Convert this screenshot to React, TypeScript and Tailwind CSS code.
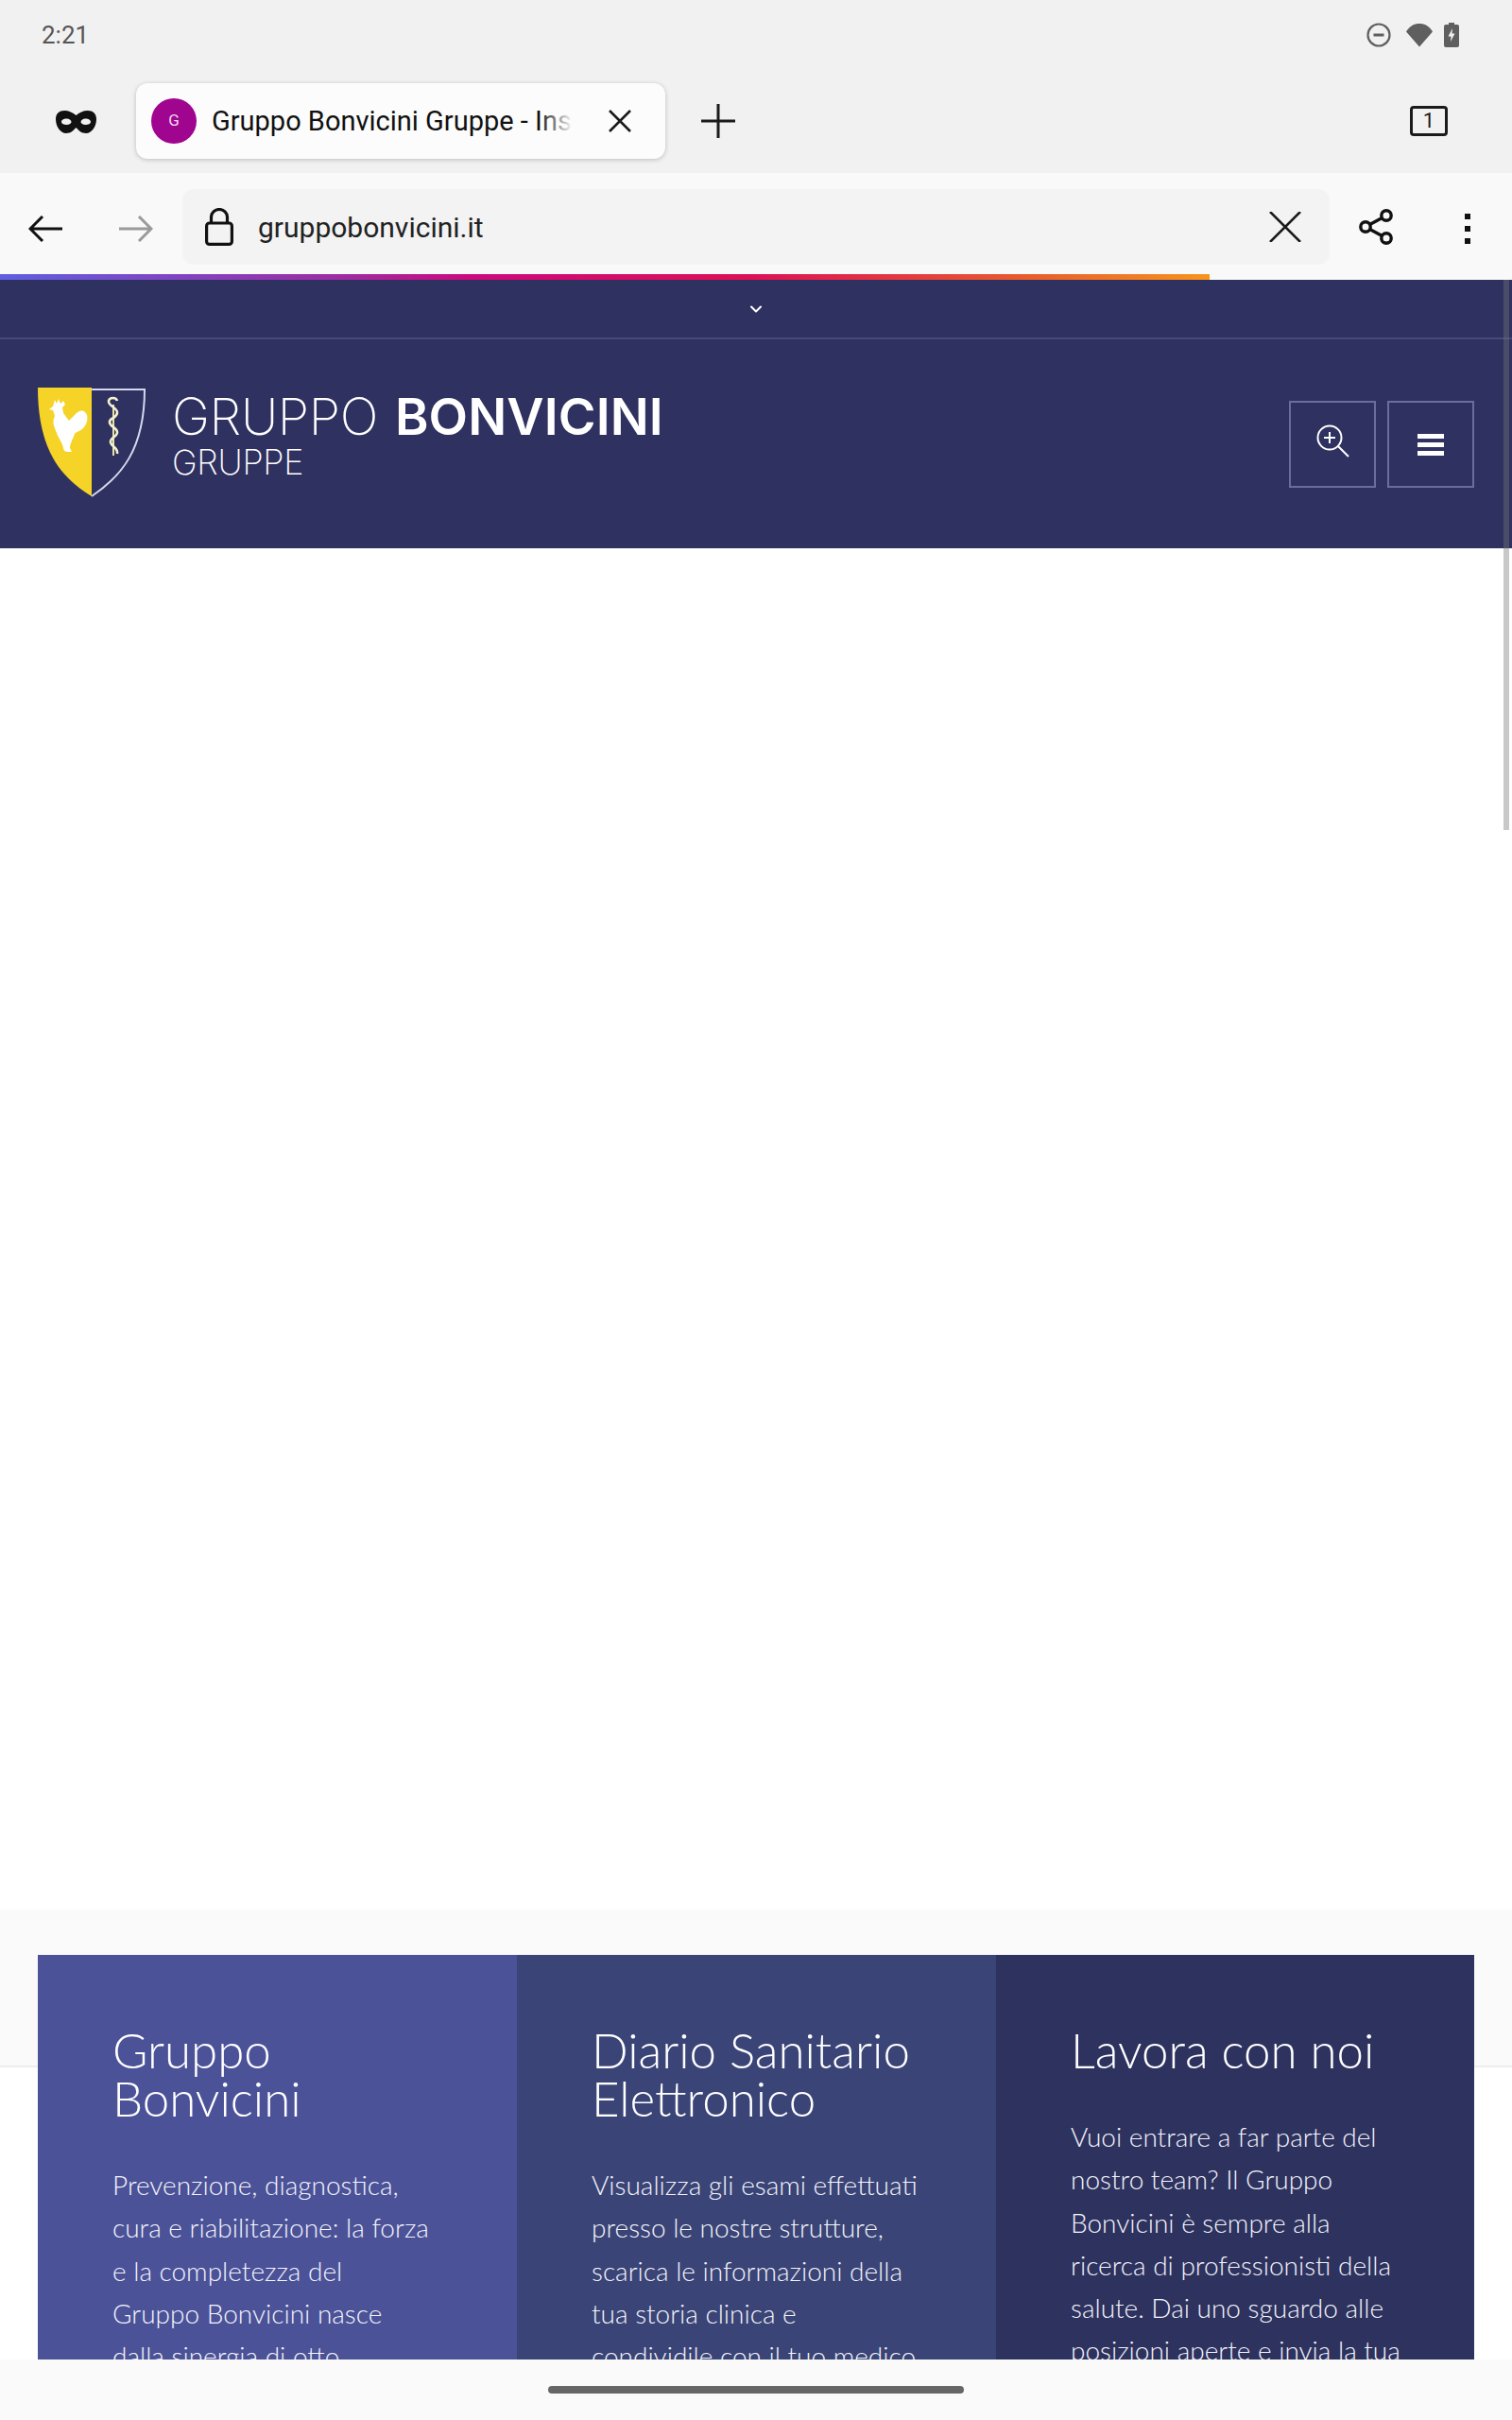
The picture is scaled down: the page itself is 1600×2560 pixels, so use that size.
import { ChevronDown } from "lucide-react";

const browserFont = "font-['Roboto',sans-serif]";
const headingFont = "font-['Inter',sans-serif]";
const cardFont = "font-['Lato',sans-serif]";

type InfoCard = {
  title: string[];
  lines: string[];
  bg: string;
};

const cards: InfoCard[] = [
  {
    title: ["Gruppo", "Bonvicini"],
    lines: [
      "Prevenzione, diagnostica,",
      "cura e riabilitazione: la forza",
      "e la completezza del",
      "Gruppo Bonvicini nasce",
      "dalla sinergia di otto",
    ],
    bg: "bg-[#4b5298]",
  },
  {
    title: ["Diario Sanitario", "Elettronico"],
    lines: [
      "Visualizza gli esami effettuati",
      "presso le nostre strutture,",
      "scarica le informazioni della",
      "tua storia clinica e",
      "condividile con il tuo medico",
    ],
    bg: "bg-[#3a4476]",
  },
  {
    title: ["Lavora con noi"],
    lines: [
      "Vuoi entrare a far parte del",
      "nostro team? Il Gruppo",
      "Bonvicini è sempre alla",
      "ricerca di professionisti della",
      "salute. Dai uno sguardo alle",
      "posizioni aperte e invia la tua",
    ],
    bg: "bg-[#2e325f]",
  },
];

function StatusBar() {
  return (
    <div className="flex h-[74px] items-center justify-between pl-[44px] pr-[56px]">
      <span className={`${browserFont} text-[26px] text-[#555555]`}>2:21</span>
      <div className="flex items-center">
        <svg width="26" height="26" viewBox="0 0 26 26" fill="none" stroke="#5f5f5f">
          <circle cx="13" cy="13" r="11.5" strokeWidth="2.2" />
          <path d="M7.5 13h11" strokeWidth="3" />
        </svg>
        <svg className="ml-[15px]" width="30" height="26" viewBox="0 0 30 26" fill="#5f5f5f">
          <path d="M15 25.5 1 9.5C4.5 3.5 9.5 1 15 1s10.500 2.500 14 8.500z" />
        </svg>
        <svg className="ml-[11px]" width="16" height="26" viewBox="0 0 16 26">
          <path d="M5 0h6v2h3a2 2 0 0 1 2 2v20a2 2 0 0 1-2 2H2a2 2 0 0 1-2-2V4a2 2 0 0 1 2-2h3z" fill="#5f5f5f" />
          <path d="M9 6 4.500 14.500H7.500L7 20l4.500-8.500H8.500z" fill="#f1f1f1" />
        </svg>
      </div>
    </div>
  );
}

function TabStrip() {
  return (
    <div className="flex h-[109px] items-start pl-[59px] pr-[68px] pt-[14px]">
      <svg className="mt-[29px]" width="43" height="24" viewBox="0 0 43 24" fill="#111">
        <path
          fillRule="evenodd"
          d="M9 0c5 0 9 2 12.500 5C25 2 29 0 34 0c5 0 9 3 9 9 0 8-5 15-11 15-5 0-7.500-3-10.500-6-3 3-5.500 6-10.500 6C5 24 0 17 0 9 0 3 4 0 9 0zm2.500 8.500C8.500 8.500 6 10 6 12s2.500 3 5.500 3 5-1.500 5-3-2-3.500-5-3.500zm20 0c-3 0-5 2-5 3.500s2 3 5 3 5.500-1 5.500-3-2.500-3.500-5.500-3.500z"
        />
      </svg>
      <div className="ml-[42px] flex h-[80px] w-[560px] items-center rounded-[12px] bg-[#fcfcfc] pl-[16px] pr-[35px] shadow-[0_1px_5px_rgba(0,0,0,0.22)]">
        <div className={`${browserFont} flex h-[48px] w-[48px] shrink-0 items-center justify-center rounded-full bg-[#a0058f] text-[17px] text-[#f3d9ef]`}>
          G
        </div>
        <div className="relative ml-[16px] w-[382px] overflow-hidden whitespace-nowrap">
          <span className={`${browserFont} text-[29px] leading-[40px] text-[#111111]`}>Gruppo Bonvicini Gruppe - Inspiring</span>
          <div className="absolute inset-y-0 right-0 w-[36px] bg-gradient-to-r from-transparent to-[#fcfcfc]" />
        </div>
        <svg className="ml-auto" width="26" height="26" viewBox="0 0 26 26" stroke="#1b1b1b" strokeWidth="2.600">
          <path d="M2 2l22 22M24 2 2 24" />
        </svg>
      </div>
      <svg className="ml-[38px] mt-[22px]" width="36" height="36" viewBox="0 0 36 36" stroke="#1b1b1b" strokeWidth="3">
        <path d="M18 0v36M0 18h36" />
      </svg>
      <div className={`${browserFont} ml-auto mt-[24px] flex h-[32px] w-[40px] items-center justify-center rounded-[4px] border-[3px] border-[#1b1b1b] text-[22px] leading-none text-[#1b1b1b]`}>
        1
      </div>
    </div>
  );
}

function Toolbar() {
  return (
    <div className="flex h-[107px] items-start bg-[#f9f9f9] pt-[17px]">
      <svg className="ml-[30px] mt-[28px]" width="36" height="28" viewBox="0 0 36 28" fill="none" stroke="#111" strokeWidth="3">
        <path d="M36 14H2M15 1 2 14l13 13" />
      </svg>
      <svg className="ml-[60px] mt-[28px]" width="36" height="28" viewBox="0 0 36 28" fill="none" stroke="#9a9a9a" strokeWidth="3">
        <path d="M0 14h34M21 1l13 13-13 13" />
      </svg>
      <div className="ml-[31px] flex h-[80px] w-[1214px] items-center rounded-[12px] bg-[#f3f3f3] pl-[24px] pr-[30px]">
        <svg width="30" height="40" viewBox="0 0 30 40" fill="none" stroke="#111" strokeWidth="3.200">
          <rect x="1.600" y="16" width="26.800" height="22.400" rx="3" />
          <path d="M6.500 16V9.500a8.500 8 0 0 1 17 0V16" />
        </svg>
        <span className={`${browserFont} ml-[26px] text-[30px] text-[#222]`}>gruppobonvicini.it</span>
        <svg className="ml-auto" width="34" height="32" viewBox="0 0 34 32" stroke="#1b1b1b" strokeWidth="2.600">
          <path d="M1 0l32 32M33 0 1 32" />
        </svg>
      </div>
      <svg className="ml-[31px] mt-[21px]" width="36" height="38" viewBox="0 0 36 38" fill="none" stroke="#111" strokeWidth="3.400">
        <circle cx="7" cy="19" r="5.200" />
        <circle cx="29" cy="7" r="5.200" />
        <circle cx="29" cy="31" r="5.200" />
        <path d="m11.500 16.500 13-7M11.500 21.500l13 7" />
      </svg>
      <div className="ml-[76px] mt-[26px] flex flex-col gap-[7px]">
        <div className="h-[6px] w-[6px] bg-[#111]" />
        <div className="h-[6px] w-[6px] bg-[#111]" />
        <div className="h-[6px] w-[6px] bg-[#111]" />
      </div>
    </div>
  );
}

function ShieldLogo() {
  return (
    <svg width="116" height="116" viewBox="0 0 116 116" className="mt-[1px] shrink-0">
      <path d="M0 0h57v115C26 96 0 68 0 0z" fill="#f5d327" />
      <path d="M57 2h56c0 64-25 92-56 113" fill="#2f3160" stroke="#d6d8ee" strokeWidth="2" />
      {/* rooster */}
      <path
        fill="#fff"
        d="M18 13l2 4 2-5 2 5 3-3 2 4-3 3 1 6 6 8 6-6c3-4 8-6 11-3 4 3 3 12-2 17-3 3-8 4-9 6-2 6-5 10-5 15l2 4h-5l-3-1-1-3c-1-6-5-10-7-16-3-7-5-12-2-18l-2-6-4-1 4-3z"
      />
      {/* rod with serpent */}
      <path d="M80 18 V 72" stroke="#e8e4a8" strokeWidth="2" fill="none" />
      <path
        d="M84 14c-1-4-8-4-9 0-1 6 10 7 9 13s-9 5-8 10 9 6 8 11-8 5-7 10 8 5 7 12"
        fill="none"
        stroke="#f4f1cf"
        strokeWidth="2.600"
      />
    </svg>
  );
}

function SiteHeader() {
  return (
    <header className="bg-[#2f3160]">
      <div className="flex h-[63px] items-center justify-center border-b-2 border-[#464a7a] text-white">
        <ChevronDown size={20} strokeWidth={2.500} />
      </div>
      <div className="flex h-[221px] items-start px-[40px] pt-[50px]">
        <ShieldLogo />
        <div className={`${headingFont} ml-[26px] mt-[2px] text-white`}>
          <div className="text-[54px] leading-[60px] whitespace-nowrap">
            <span className="font-extralight tracking-[-0.4px]">GRUPPO</span>
            <span className="ml-[18px] font-semibold tracking-[0.1px]">BONVICINI</span>
          </div>
          <div className="mt-[-3px] text-[36px] font-extralight leading-[42px] tracking-[-0.3px]">GRUPPE</div>
        </div>
        <div className="ml-auto mt-[15px] flex gap-[12px]">
          <button className="flex h-[92px] w-[92px] items-center justify-center border-2 border-[#696e9f]">
            <svg className="mb-[6px] mr-[1px]" width="36" height="36" viewBox="0 0 36 36" fill="none" stroke="#fff" strokeWidth="2">
              <circle cx="15" cy="14" r="12.500" />
              <path d="m24 23 11 11M15 8v12M9 14h12" />
            </svg>
          </button>
          <button className="flex h-[92px] w-[92px] flex-col items-center justify-center gap-[4px] border-2 border-[#696e9f]">
            <div className="h-[5px] w-[28px] bg-white" />
            <div className="h-[5px] w-[28px] bg-white" />
            <div className="h-[5px] w-[28px] bg-white" />
          </button>
        </div>
      </div>
    </header>
  );
}

function Card({ card }: { card: InfoCard }) {
  return (
    <div className={`${card.bg} ${cardFont} h-[520px] pl-[79px] pr-[60px] pt-[75px] text-white`}>
      <h2 className="text-[51px] font-light leading-[51px] whitespace-nowrap">
        {card.title.map((line) => (
          <div key={line}>{line}</div>
        ))}
      </h2>
      <div className="mt-[44px] text-[28px] font-light leading-[45.300px] text-[#f4f5fb] whitespace-nowrap">
        {card.lines.map((line) => (
          <p key={line}>{line}</p>
        ))}
      </div>
    </div>
  );
}

export default function App() {
  return (
    <div className="relative flex h-[2560px] w-[1600px] flex-col overflow-hidden bg-white">
      <div className="bg-[#f1f1f1]">
        <StatusBar />
        <TabStrip />
      </div>
      <Toolbar />
      <div className="relative h-[6px] bg-[#f9f9f9]">
        <div className="h-full w-[1280px] bg-[linear-gradient(to_right,#5f5fe0_0%,#a02aa0_29%,#cc0a7c_39%,#dd1055_62%,#e8602c_86%,#f7941d_100%)]" />
      </div>

      <main className="min-h-0 flex-1 overflow-hidden">
        <SiteHeader />
        <div className="h-[1440px] bg-white" />
        <div className="h-[167px] border-b-2 border-[#eeeeee] bg-[#fafafa]" />
        <div className="relative mt-[-119px] grid grid-cols-[507px_507px_506px] px-[40px]">
          {cards.map((card) => (
            <Card key={card.title[0]} card={card} />
          ))}
        </div>
      </main>

      <div className="flex h-[64px] shrink-0 justify-center bg-[#fafafa] pt-[28px]">
        <div className="h-[8px] w-[440px] rounded-full bg-[#666666]" />
      </div>

      {/* overlay scrollbar */}
      <div className="absolute right-[3px] top-[296px] h-[582px] w-[6px] bg-[#757575]/40" />
    </div>
  );
}
